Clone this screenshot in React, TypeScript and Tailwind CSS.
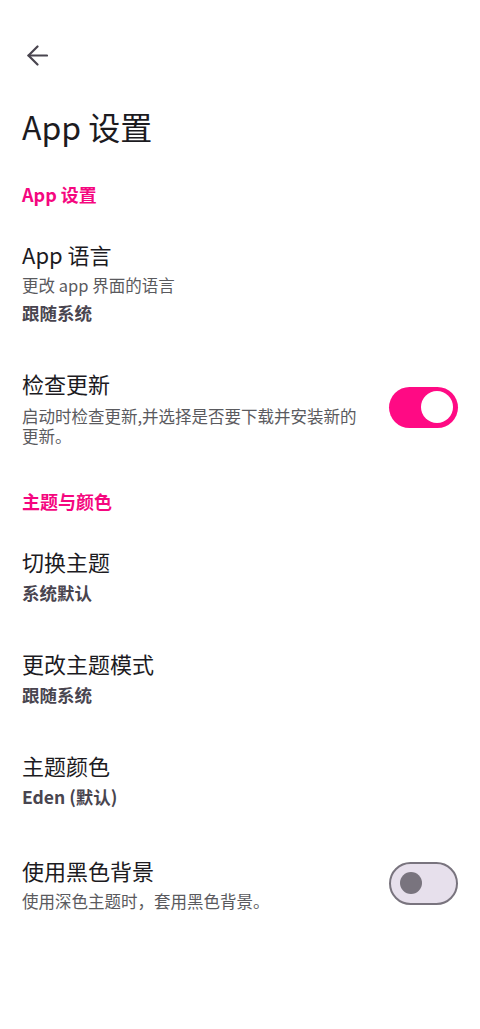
import React from "react"

const font = { fontFamily: '"Noto Sans CJK SC", "Noto Sans", sans-serif' }

function BackArrow() {
  return (
    <svg width="21" height="21" viewBox="0 0 21 21" fill="none" stroke="#49454f" strokeWidth="2.2" strokeLinecap="round" strokeLinejoin="round">
      <polyline points="10.5,1.5 1.5,10.5 10.5,19.5" />
      <line x1="1.5" y1="10.5" x2="20" y2="10.5" />
    </svg>
  )
}

function Toggle({ on }: { on: boolean }) {
  if (on) {
    return (
      <div className="flex h-[41px] w-[69px] shrink-0 items-center justify-end rounded-full bg-[#ff0a84] pr-[5px]">
        <div className="h-[32px] w-[32px] rounded-full bg-white" />
      </div>
    )
  }
  return (
    <div className="flex h-[43px] w-[69px] shrink-0 items-center rounded-full border-[2.5px] border-[#79747e] bg-[#e7e0ec] pl-[9px]">
      <div className="h-[22px] w-[22px] rounded-full bg-[#79747e]" />
    </div>
  )
}

function SectionHeader({ children, className }: { children: React.ReactNode; className?: string }) {
  return (
    <div className={`px-[22px] pb-[12px] text-[18px] font-bold leading-[24px] text-[#f5077f] ${className ?? ""}`}>
      {children}
    </div>
  )
}

function ValueItem({ title, value, className }: { title: string; value: string; className?: string }) {
  return (
    <div className={`px-[22px] pt-[21px] pb-[20px] ${className ?? ""}`}>
      <div className="text-[22px] leading-[30px] text-[#1c1b1f]">{title}</div>
      <div className="mt-[3px] text-[17.5px] font-bold leading-[28px] text-[#49454f]">{value}</div>
    </div>
  )
}

export default function App() {
  return (
    <div className="min-h-[1029px] w-[480px] bg-white" style={font}>
      <div className="pt-[45px] pl-[27px]">
        <BackArrow />
      </div>
      <h1 className="mt-[40px] px-[22px] text-[32px] font-normal leading-[40px] text-[#1c1b1f]">App 设置</h1>

      <SectionHeader className="mt-[36px]">App 设置</SectionHeader>

      <div className="px-[22px] pt-[21px] pb-[20px]">
        <div className="text-[22px] leading-[30px] text-[#1c1b1f]">App 语言</div>
        <div className="mt-[2px] text-[16.5px] leading-[28px] text-[#5a5a5e]">更改 app 界面的语言</div>
        <div className="text-[17.5px] font-bold leading-[28px] text-[#49454f]">跟随系统</div>
      </div>

      <div className="flex items-center gap-[26px] px-[22px] pt-[21px] pb-[20px]">
        <div className="flex-1">
          <div className="text-[22px] leading-[30px] text-[#1c1b1f]">检查更新</div>
          <div className="mt-[8px] text-[16.5px] leading-[20px] text-[#5a5a5e]">
            启动时检查更新,并选择是否要下载并安装新的更新。
          </div>
        </div>
        <Toggle on />
      </div>

      <SectionHeader className="pt-[23px]">主题与颜色</SectionHeader>

      <ValueItem title="切换主题" value="系统默认" />
      <ValueItem title="更改主题模式" value="跟随系统" />
      <ValueItem title="主题颜色" value="Eden (默认)" />

      <div className="flex items-center gap-[26px] px-[22px] pt-[24px] pb-[20px]">
        <div className="flex-1">
          <div className="text-[22px] leading-[30px] text-[#1c1b1f]">使用黑色背景</div>
          <div className="mt-[6px] text-[16.5px] leading-[20px] text-[#5a5a5e]">使用深色主题时，套用黑色背景。</div>
        </div>
        <Toggle on={false} />
      </div>
    </div>
  )
}
